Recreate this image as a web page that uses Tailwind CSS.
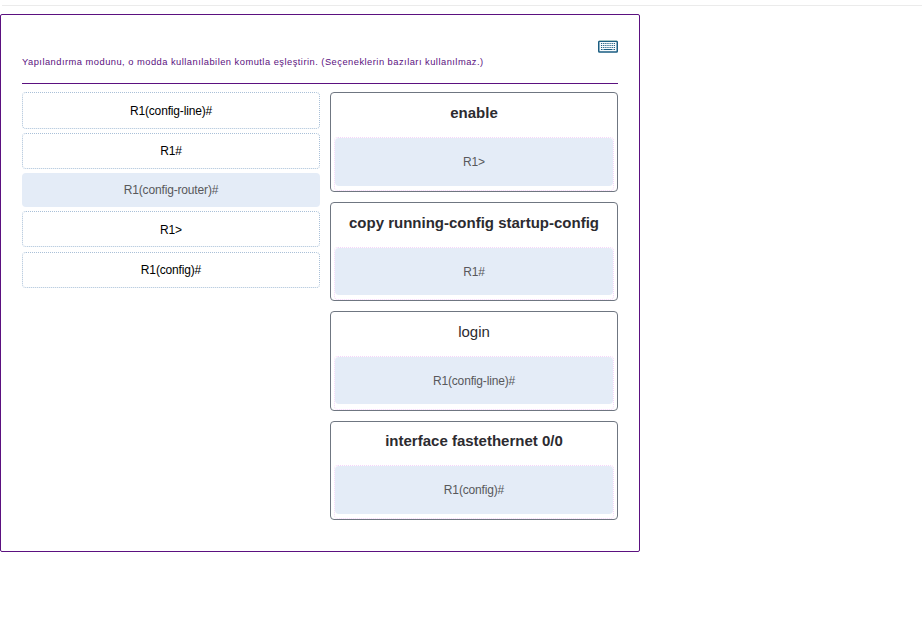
<!DOCTYPE html>
<html lang="tr">
<head>
<meta charset="utf-8">
<title>Eşleştirme</title>
<script src="https://cdn.jsdelivr.net/npm/@tailwindcss/browser@4"></script>
</head>
<body class="bg-white font-['Liberation_Sans',Arial,sans-serif] w-[922px] h-[622px] overflow-hidden">
<div class="ml-[2px] mt-[5px] h-px bg-[#ebebeb]"></div>
<main class="mt-2 w-[640px] h-[538px] border border-[#5b1180] rounded-[2px] px-[21px] pt-[26px]">
  <header class="h-[43px] border-b border-[#5b1180] flex justify-between items-start">
    <p class="mt-[14px] text-[9.33px] leading-[14px] tracking-[0.475px] text-[#5b1180] whitespace-nowrap">Yapılandırma modunu, o modda kullanılabilen komutla eşleştirin. (Seçeneklerin bazıları kullanılmaz.)</p>
    <svg class="w-5 h-[13px] shrink-0 -mt-px" viewBox="0 0 20 13">
      <rect x="0.75" y="1.25" width="18.500" height="10.750" rx="0.800" fill="#f7fbfd" stroke="#1b5e82" stroke-width="1.500"/>
      <rect x="1" width="18" height="0.700" fill="#b5d3c8"/>
      <path d="M3 3.500h14M3 5.500h14M3 7.500h14" stroke="#1b5e82" stroke-width="1" stroke-dasharray="1.200 0.930"/>
      <path d="M3 9.500h1.500M5.500 9.500h9M15.500 9.500h1.500" stroke="#1b5e82" stroke-width="1"/>
    </svg>
  </header>
  <div class="mt-2 flex gap-[10px]">
    <section class="w-[298px] flex flex-col text-[12px] tracking-[-0.16px] text-black text-center">
      <div class="h-[37px] border border-dotted border-[#a9c0d8] rounded-[4px] flex items-center justify-center">R1(config-line)#</div>
      <div class="mt-1 h-[36px] border border-dotted border-[#a9c0d8] rounded-[4px] flex items-center justify-center">R1#</div>
      <div class="mt-1 h-[34px] bg-[#e4ecf7] text-[#58585b] rounded-[4px] flex items-center justify-center">R1(config-router)#</div>
      <div class="mt-1 h-[36px] pt-[2px] border border-dotted border-[#a9c0d8] rounded-[4px] flex items-center justify-center">R1&gt;</div>
      <div class="mt-[5px] h-[36px] border border-dotted border-[#a9c0d8] rounded-[4px] flex items-center justify-center">R1(config)#</div>
    </section>
    <section class="w-[288px] flex flex-col gap-[10px] text-center text-[#2c2b30]">
      <article class="h-[100px] border border-[#6f7681] rounded-[4px] px-[3px]">
        <h2 class="h-[44px] pt-[10px] text-[15px] leading-5 font-bold">enable</h2>
        <div class="h-[54px] border border-dotted border-[#f5d5fa] rounded-[4px]"><div class="h-[48px] bg-[#e4ecf7] rounded-[4px] flex items-center justify-center text-[12px] tracking-[-0.16px] text-[#58585b]">R1&gt;</div></div>
      </article>
      <article class="h-[99px] border border-[#6f7681] rounded-[4px] px-[3px]">
        <h2 class="h-[44px] pt-[10px] text-[15px] leading-5 font-bold">copy running-config startup-config</h2>
        <div class="h-[53px] border border-dotted border-[#f5d5fa] rounded-[4px]"><div class="h-[47px] bg-[#e4ecf7] rounded-[4px] flex items-center justify-center text-[12px] tracking-[-0.16px] text-[#58585b]">R1#</div></div>
      </article>
      <article class="h-[100px] border border-[#6f7681] rounded-[4px] px-[3px]">
        <h2 class="h-[44px] pt-[10px] text-[15px] leading-5 font-normal">login</h2>
        <div class="h-[54px] border border-dotted border-[#f5d5fa] rounded-[4px]"><div class="h-[47px] bg-[#e4ecf7] rounded-[4px] flex items-center justify-center text-[12px] tracking-[-0.16px] text-[#58585b]">R1(config-line)#</div></div>
      </article>
      <article class="h-[99px] border border-[#6f7681] rounded-[4px] px-[3px]">
        <h2 class="h-[43px] pt-[9px] text-[15px] leading-5 font-bold">interface fastethernet 0/0</h2>
        <div class="h-[54px] border border-dotted border-[#f5d5fa] rounded-[4px]"><div class="h-[48px] bg-[#e4ecf7] rounded-[4px] flex items-center justify-center text-[12px] tracking-[-0.16px] text-[#58585b]">R1(config)#</div></div>
      </article>
    </section>
  </div>
</main>
</body>
</html>
